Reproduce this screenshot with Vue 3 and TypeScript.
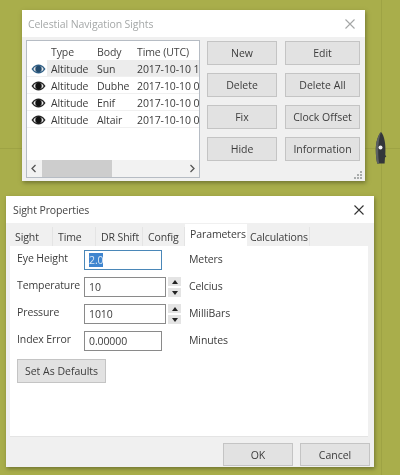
<script setup lang="ts">
interface Sight { type: string; body: string; time: string }
const sights: Sight[] = [
  { type: 'Altitude', body: 'Sun', time: '2017-10-10 1' },
  { type: 'Altitude', body: 'Dubhe', time: '2017-10-10 0' },
  { type: 'Altitude', body: 'Enif', time: '2017-10-10 0' },
  { type: 'Altitude', body: 'Altair', time: '2017-10-10 0' },
]
const actions: string[] = ['New', 'Edit', 'Delete', 'Delete All', 'Fix', 'Clock Offset', 'Hide', 'Information']
const tabs = [
  { label: 'Sight', width: 43 },
  { label: 'Time', width: 43 },
  { label: 'DR Shift', width: 47 },
  { label: 'Config', width: 42 },
  { label: 'Parameters', width: 62 },
  { label: 'Calculations', width: 63 },
]
const params = [
  { label: 'Eye Height', value: '2.0', unit: 'Meters', spin: false, focus: true },
  { label: 'Temperature', value: '10', unit: 'Celcius', spin: true, focus: false },
  { label: 'Pressure', value: '1010', unit: 'MilliBars', spin: true, focus: false },
  { label: 'Index Error', value: '0.00000', unit: 'Minutes', spin: false, focus: false },
]
</script>

<template>
  <div class="desktop">
    <div class="grid-h"></div>
    <div class="grid-v"></div>
    <svg class="boat" width="14" height="34" viewBox="0 0 14 34">
      <path d="M7 1C4 4 1.800 11 1.800 19c0 5 .6 10 1.400 13.500h7.400l.4-6 1.300-1-1-1.500C12 13 10.400 4.500 7 1z" fill="#33363a" />
      <path d="M7 1C5.200 6 4.200 13 4.200 20c0 5 .4 9 1 12.500H3.200C2.400 29 1.800 24 1.800 19 1.800 11 4 4 7 1z" fill="#5c6062" />
      <circle cx="6.500" cy="16.500" r="2" fill="#f4f4f4" />
    </svg>

    <section class="window sights-window">
      <header class="title muted">
        <span>Celestial Navigation Sights</span>
        <svg class="close" width="12" height="12" viewBox="0 0 12 12"><path d="M1.500 1.500l9 9M10.500 1.500l-9 9" stroke="#a4a6a6" stroke-width="1.100" fill="none" /></svg>
      </header>
      <div class="sights-body">
        <div class="list">
          <div class="list-row head">
            <span class="c-eye"></span>
            <span class="c-type">Type</span>
            <span class="c-body">Body</span>
            <span class="c-time">Time (UTC)</span>
          </div>
          <div v-for="(s, i) in sights" :key="s.body" class="list-row item" :class="{ selected: i === 0 }">
            <span class="c-eye">
              <svg width="15" height="10" viewBox="0 0 15 10">
                <path d="M.500 5C3 1.500 5 .500 7.500 .500S12 1.500 14.500 5C12 8.500 10 9.500 7.500 9.500S3 8.500 .500 5z" :fill="i === 0 ? '#2f5f86' : '#222'" />
                <ellipse cx="7.500" cy="5" rx="5" ry="3" fill="#e8e8e8" />
                <circle cx="7.500" cy="5" r="3.200" :fill="i === 0 ? '#234b6e' : '#111'" />
              </svg>
            </span>
            <span class="c-type">{{ s.type }}</span>
            <span class="c-body">{{ s.body }}</span>
            <span class="c-time">{{ s.time }}</span>
          </div>
          <div class="hscroll">
            <svg width="7" height="9" viewBox="0 0 7 9"><path d="M5.500 1L2 4.500 5.500 8" stroke="#555" stroke-width="1.300" fill="none" /></svg>
            <div class="track"><div class="thumb"></div></div>
            <svg width="7" height="9" viewBox="0 0 7 9"><path d="M1.500 1L5 4.500 1.500 8" stroke="#555" stroke-width="1.300" fill="none" /></svg>
          </div>
        </div>
        <div class="actions">
          <button v-for="a in actions" :key="a" class="btn">{{ a }}</button>
        </div>
      </div>
      <svg class="grip" width="9" height="9" viewBox="0 0 9 9" fill="#a9acac">
        <rect x="7" y="1" width="2" height="2" /><rect x="4" y="4" width="2" height="2" /><rect x="7" y="4" width="2" height="2" />
        <rect x="1" y="7" width="2" height="2" /><rect x="4" y="7" width="2" height="2" /><rect x="7" y="7" width="2" height="2" />
      </svg>
    </section>

    <section class="window props-window">
      <header class="title">
        <span>Sight Properties</span>
        <svg class="close" width="12" height="12" viewBox="0 0 12 12"><path d="M1.500 1.500l9 9M10.500 1.500l-9 9" stroke="#333" stroke-width="1.100" fill="none" /></svg>
      </header>
      <div class="props-body">
        <nav class="tabs">
          <span
            v-for="t in tabs"
            :key="t.label"
            class="tab"
            :class="{ active: t.label === 'Parameters', last: t.label === 'Calculations' }"
            :style="{ width: t.width + 'px' }"
          >{{ t.label }}</span>
        </nav>
        <div class="pane">
          <div class="form">
            <template v-for="p in params" :key="p.label">
              <label class="f-label">{{ p.label }}</label>
              <div class="f-control">
                <div class="input" :class="{ focus: p.focus, narrow: p.spin }">
                  <span :class="{ sel: p.focus }">{{ p.value }}</span>
                </div>
                <div v-if="p.spin" class="spin">
                  <span class="up"></span>
                  <span class="down"></span>
                </div>
              </div>
              <span class="f-unit">{{ p.unit }}</span>
            </template>
          </div>
          <button class="btn defaults">Set As Defaults</button>
        </div>
        <footer class="footer">
          <button class="btn ok">OK</button>
          <button class="btn ok">Cancel</button>
        </footer>
      </div>
    </section>
  </div>
</template>

<style>
html, body { margin: 0; padding: 0; }
</style>

<style scoped>
.desktop {
  position: relative;
  width: 400px;
  height: 475px;
  overflow: hidden;
  background: #a9ae4b;
  font-family: "Open Sans", "Noto Sans", sans-serif;
  font-size: 10.500px;
  letter-spacing: -0.1px;
  color: #3c3c3c;
  filter: blur(0.35px);
}
.grid-h { position: absolute; left: 0; right: 0; top: 148px; height: 1px; background: #9ea344; }
.grid-v { position: absolute; top: 0; bottom: 0; left: 381px; width: 1px; background: #9ea344; }
.boat { position: absolute; left: 374px; top: 131px; }

.window {
  position: absolute;
  box-sizing: border-box;
  display: flex;
  flex-direction: column;
  background: #f0f0f0;
  box-shadow: 1px 2px 4px rgba(70, 72, 30, 0.55);
}
.sights-window { left: 22px; top: 10px; width: 343px; height: 171px; }
.props-window { left: 6px; top: 196px; width: 368px; height: 271px; }

.title {
  flex: none;
  height: 27px;
  box-sizing: border-box;
  padding: 0 7px;
  display: flex;
  align-items: center;
  justify-content: space-between;
  background: #fff;
  font-size: 10.500px;
  color: #444;
}
.title.muted { color: #a5a8a8; padding-left: 6px; }
.close { margin-right: 2px; }

.sights-body {
  flex: 1;
  min-height: 0;
  display: flex;
  gap: 7px;
  padding: 3px 5px 3px 4px;
}
.list {
  width: 174px;
  box-sizing: border-box;
  border: 1px solid #b6bcc4;
  background: #fff;
  display: flex;
  flex-direction: column;
  overflow: hidden;
}
.list-row { display: flex; align-items: center; white-space: nowrap; flex: none; }
.head { height: 19px; padding-top: 3px; box-sizing: border-box; color: #444; }
.item { height: 17px; padding-top: 1px; border-bottom: 1px solid #f0f0f0; box-sizing: border-box; }
.item.selected { background: linear-gradient(to right, #fff 20px, #ececec 20px); }
.c-eye { width: 20px; flex: none; display: flex; justify-content: center; padding-left: 2px; box-sizing: border-box; }
.c-type { width: 50px; flex: none; padding-left: 4px; box-sizing: border-box; }
.c-body { width: 40px; flex: none; }
.c-time { flex: none; }
.hscroll {
  margin-top: auto;
  height: 17px;
  display: flex;
  align-items: center;
  background: #f2f2f2;
  padding: 0 3px;
  gap: 3px;
}
.track { flex: 1; height: 100%; }
.thumb { width: 70px; height: 100%; margin-left: 2px; background: #cdcdcd; }

.actions {
  flex: 1;
  display: grid;
  grid-template-columns: 70px 75px;
  grid-auto-rows: 24px;
  column-gap: 8px;
  row-gap: 8px;
  align-content: start;
  padding-top: 1px;
}
.btn {
  box-sizing: border-box;
  border: 1px solid #c4c4c4;
  background: #e2e2e2;
  color: #3c3c3c;
  font: inherit;
  font-size: 10.500px;
  padding: 0;
  white-space: nowrap;
}
.grip { position: absolute; right: 3px; bottom: 2px; }

.props-body { flex: 1; min-height: 0; display: flex; flex-direction: column; }
.tabs { flex: none; display: flex; align-items: flex-end; height: 23px; padding-left: 4px; }
.tab {
  box-sizing: border-box;
  height: 19px;
  display: flex;
  align-items: center;
  padding-left: 5px;
  flex: none;
  background: #f0f0f0;
  border-right: 1px solid #e4e4e4;
}
.tab.active { height: 22px; background: #fff; padding-bottom: 3px; border-right: 0; }
.tab.last { padding-left: 3px; }
.pane {
  flex: 1;
  margin: 0 6px 0 4px;
  background: #fff;
  border-bottom: 1px solid #e4e4e4;
  padding: 4px 7px;
  box-sizing: border-box;
  display: flex;
  flex-direction: column;
  align-items: flex-start;
}
.form {
  display: grid;
  grid-template-columns: 67px 105px auto;
  grid-auto-rows: 20px;
  row-gap: 7px;
  align-items: center;
}
.f-label { position: relative; top: -2px; }
.f-unit { position: relative; top: -1px; }
.f-control { display: flex; align-items: center; gap: 2px; height: 20px; }
.input {
  box-sizing: border-box;
  width: 78px;
  height: 20px;
  border: 1px solid #8a8a8a;
  background: #fff;
  padding-left: 4px;
  display: flex;
  align-items: center;
}
.input.narrow { width: 82px; }
.input.focus { border-color: #4a87b8; }
.sel { background: #3f85cf; color: #dce8f4; }
.spin { width: 13px; height: 20px; display: flex; flex-direction: column; justify-content: space-between; }
.spin span {
  height: 9px;
  background: #e4e4e4;
  position: relative;
}
.spin span::after {
  content: "";
  position: absolute;
  left: 3.500px;
  top: 2.500px;
  border-left: 3px solid transparent;
  border-right: 3px solid transparent;
}
.spin .up::after { border-bottom: 4px solid #222; }
.spin .down::after { border-top: 4px solid #222; }
.defaults { width: 89px; height: 24px; margin-top: 8px; }
.footer {
  flex: none;
  height: 30px;
  display: flex;
  justify-content: flex-end;
  gap: 7px;
  padding: 6px 4px 1px 0;
  box-sizing: border-box;
}
.ok { width: 70px; }
</style>
